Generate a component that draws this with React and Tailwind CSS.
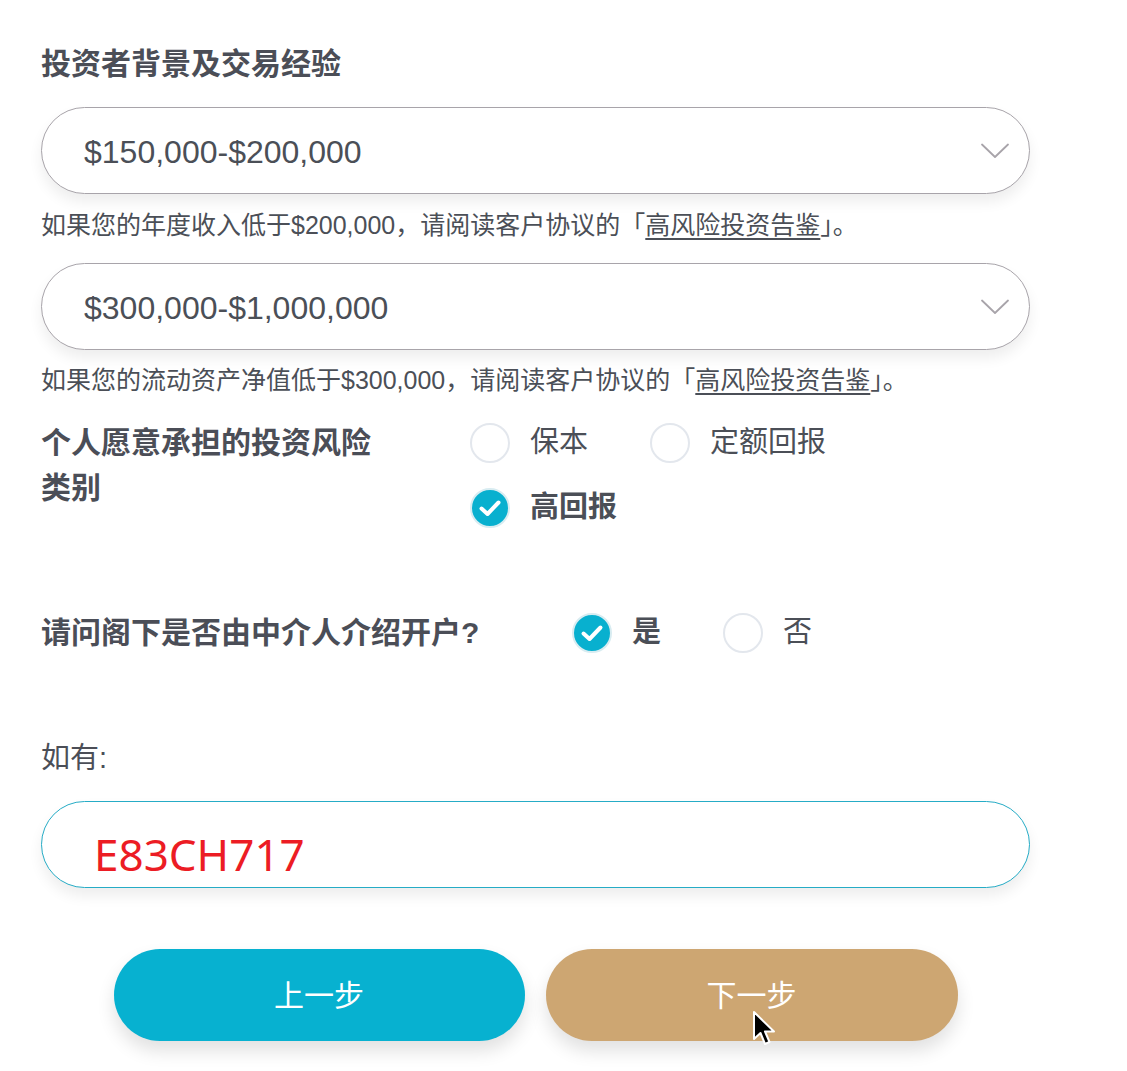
import React from 'react';

const FONT = { fontFamily: '"Liberation Sans", "Noto Sans CJK SC", sans-serif' };

const Chevron = () => (
  <svg width="28" height="16" viewBox="0 0 28 16" fill="none">
    <polyline points="1,1.5 14,14 27,1.5" stroke="#a8a4aa" strokeWidth="1.8" strokeLinecap="round" strokeLinejoin="round" />
  </svg>
);

const SelectBox = ({ value }) => (
  <div className="flex items-center justify-between h-[87px] w-full rounded-full border-[1.8px] border-[#a8a4aa] bg-white pl-[42px] pr-[20px] shadow-[0_8px_14px_rgba(0,0,0,0.07)]">
    <span className="text-[32px] text-[#4b4f57] pt-[2px]">{value}</span>
    <Chevron />
  </div>
);

const Helper = ({ children }) => (
  <p className="text-[25px] leading-[32px] text-[#4b4f57] whitespace-nowrap">
    {children}
    <span>「</span>
    <span className="underline underline-offset-4 decoration-[1.5px]">高风险投资告鉴</span>
    <span>」。</span>
  </p>
);

const Radio = ({ label, checked }) => (
  <div className="flex items-center h-[45px] gap-[20px]">
    {checked ? (
      <span className="flex items-center justify-center w-[40px] h-[40px] rounded-full bg-[#08b0cf] border-2 border-[#d8ecf1]">
        <svg width="24" height="20" viewBox="0 0 24 20" fill="none">
          <polyline points="3.5,10.5 9.5,16 20.5,4.5" stroke="white" strokeWidth="4" strokeLinecap="round" strokeLinejoin="round" />
        </svg>
      </span>
    ) : (
      <span className="w-[40px] h-[40px] rounded-full bg-white border-2 border-[#e3e7ed]" />
    )}
    <span className={`text-[29px] text-[#4b4f57] ${checked ? 'font-bold' : ''}`}>{label}</span>
  </div>
);

const Cursor = () => (
  <svg className="absolute left-[752px] top-[1010px]" width="26" height="38" viewBox="0 0 26 38">
    <path d="M2 2 L2 29 L8.5 23 L13 34 L17.5 32 L13 21.5 L22 21.5 Z" fill="black" stroke="white" strokeWidth="2" strokeLinejoin="round" />
  </svg>
);

export default function App() {
  return (
    <div className="relative w-[1127px] h-[1071px] bg-white overflow-hidden" style={FONT}>
      <div className="w-[1030px] pl-[41px] pt-[44px]">
        <h2 className="text-[30px] leading-[40px] font-bold text-[#4b4e57]">投资者背景及交易经验</h2>

        <div className="mt-[23px]">
          <SelectBox value="$150,000-$200,000" />
        </div>
        <div className="mt-[15px]">
          <Helper>如果您的年度收入低于$200,000，请阅读客户协议的</Helper>
        </div>

        <div className="mt-[22px]">
          <SelectBox value="$300,000-$1,000,000" />
        </div>
        <div className="mt-[14px]">
          <Helper>如果您的流动资产净值低于$300,000，请阅读客户协议的</Helper>
        </div>

        <div className="mt-[24px] flex items-start">
          <div className="w-[429px]">
            <p className="w-[350px] text-[30px] leading-[45px] font-bold text-[#4b4e57]">个人愿意承担的投资风险类别</p>
          </div>
          <div className="w-[420px] flex flex-wrap gap-x-[62px] gap-y-[20px]">
            <Radio label="保本" />
            <Radio label="定额回报" />
            <Radio label="高回报" checked />
          </div>
        </div>

        <div className="mt-[80px] flex items-center">
          <div className="w-[531px] text-[30px] leading-[45px] font-bold text-[#4b4e57]">请问阁下是否由中介人介绍开户?</div>
          <div className="flex gap-x-[62px]">
            <Radio label="是" checked />
            <Radio label="否" />
          </div>
        </div>

        <p className="mt-[83px] text-[29px] leading-[40px] text-[#4b4e57]">如有:</p>

        <div className="mt-[23px] h-[87px] w-full rounded-full border-[1.8px] border-[#26acc6] bg-white pl-[52px] pt-[26px] shadow-[0_8px_14px_rgba(0,0,0,0.07)]">
          <span className="text-[44px] leading-[52px] text-[#ec1c24]" style={{ fontFamily: '"Noto Sans", "Open Sans", sans-serif' }}>E83CH717</span>
        </div>

        <div className="mt-[61px] flex justify-center gap-[21px]">
          <button className="w-[411px] h-[92px] rounded-full bg-[#07b1d0] text-white text-[30px] shadow-[0_10px_18px_rgba(0,0,0,0.12)]">上一步</button>
          <button className="w-[412px] h-[92px] rounded-full bg-[#cda672] text-white text-[30px] shadow-[0_10px_18px_rgba(0,0,0,0.12)]">下一步</button>
        </div>
      </div>
      <Cursor />
    </div>
  );
}
